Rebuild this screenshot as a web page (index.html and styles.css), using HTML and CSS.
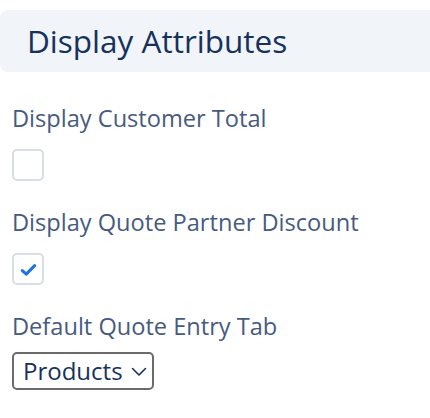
FILE: index.html
```html
<!DOCTYPE html>
<html>
<head>
<meta charset="utf-8">
<link rel="stylesheet" href="styles.css">
</head>
<body>
<div class="section-header"><h2 class="section-title">Display Attributes</h2></div>
<div class="fields">
  <div class="field">
    <div class="field-label">Display Customer Total</div>
    <span class="checkbox"></span>
  </div>
  <div class="field">
    <div class="field-label">Display Quote Partner Discount</div>
    <span class="checkbox checked">
      <svg viewBox="0 0 16 16" width="17" height="17"><path d="M2.2 9 L5.9 12.3 L13.8 4.4" fill="none" stroke="#1b76e3" stroke-width="2.9" stroke-linecap="round" stroke-linejoin="round"/></svg>
    </span>
  </div>
  <div class="field">
    <div class="field-label">Default Quote Entry Tab</div>
    <div class="select">
      <span class="select-value">Products</span>
      <svg class="chevron" viewBox="0 0 16 10" width="16" height="10"><path d="M1.5 1.5 L8 8 L14.5 1.5" fill="none" stroke="#16325c" stroke-width="1.6" stroke-linecap="round" stroke-linejoin="round"/></svg>
    </div>
  </div>
</div>
</body>
</html>
```
FILE: styles.css
```css
html, body {
  margin: 0;
  padding: 0;
  background: #ffffff;
  overflow: hidden;
}
body {
  font-family: "Open Sans", "Noto Sans", sans-serif;
  width: 430px;
  height: 418px;
}
.section-header {
  margin-top: 10px;
  margin-right: -12px;
  height: 62px;
  background: #f1f4f8;
  border-radius: 8px;
  display: flex;
  align-items: center;
  padding-left: 27px;
}
.section-title {
  margin: 0;
  font-size: 31.5px;
  font-weight: 400;
  color: #16325c;
  line-height: 1;
}
.fields {
  padding: 0 12px;
  display: flex;
  flex-direction: column;
}
.field {
  display: flex;
  flex-direction: column;
  align-items: flex-start;
}
.field-label {
  font-size: 23.6px;
  line-height: 28px;
  color: #475b7f;
}
.field:first-child .field-label { margin-top: 32px; }
.field + .field .field-label { margin-top: 27px; }
.checkbox {
  margin-top: 17px;
  width: 28px;
  height: 28px;
  border: 2px solid #d8dde6;
  border-radius: 5px;
  background: #fff;
  display: flex;
  align-items: center;
  justify-content: center;
}
.select {
  margin-top: 12px;
  height: 38px;
  width: 142px;
  box-sizing: border-box;
  border: 2px solid #6b6b6b;
  border-radius: 5px;
  display: flex;
  align-items: center;
  padding: 0 6px 0 9px;
  gap: 8px;
}
.select-value {
  font-size: 24px;
  color: #16325c;
  line-height: 1;
}
.chevron {
  flex-shrink: 0;
  margin-top: 2px;
}
```
